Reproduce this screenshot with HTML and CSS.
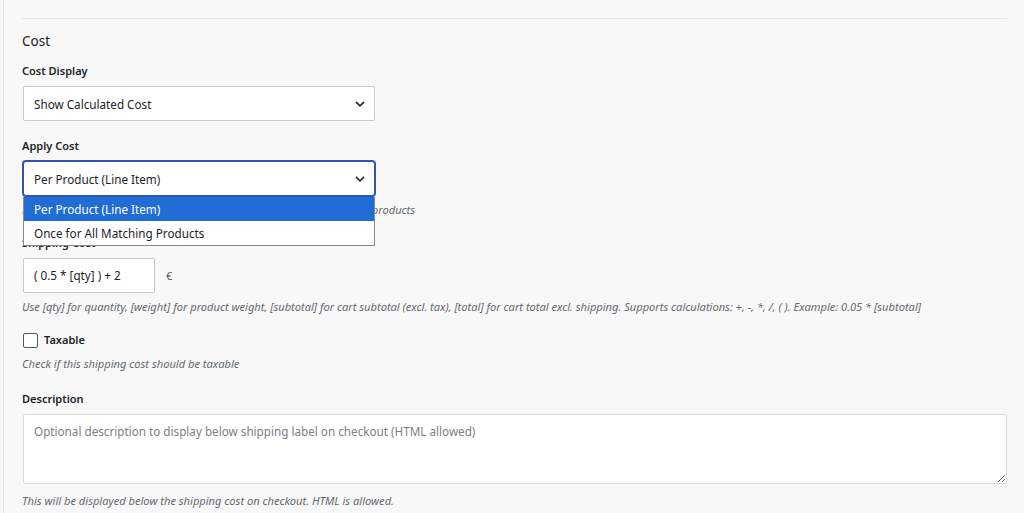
FILE: index.html
```html
<!DOCTYPE html>
<html lang="en">
<head>
    <meta charset="UTF-8">
    <title>Cost settings</title>
    <link rel="stylesheet" href="styles.css">
</head>
<body>
    <div class="page">
        <div class="divider"></div>

        <h3 class="section-title">Cost</h3>

        <div class="field">
            <label class="field-label">Cost Display</label>
            <div class="select">
                <span>Show Calculated Cost</span>
                <svg class="chevron" width="12" height="8" viewBox="0 0 12 8"><polyline points="2,2 6,5.8 10,2" fill="none" stroke="#2c3338" stroke-width="1.8"/></svg>
            </div>
        </div>

        <div class="field">
            <label class="field-label">Apply Cost</label>
            <div class="select-wrap">
                <div class="select focused">
                    <span>Per Product (Line Item)</span>
                    <svg class="chevron" width="12" height="8" viewBox="0 0 12 8"><polyline points="2,2 6,5.8 10,2" fill="none" stroke="#2c3338" stroke-width="1.8"/></svg>
                </div>
                <ul class="dropdown">
                    <li class="active">Per Product (Line Item)</li>
                    <li>Once for All Matching Products</li>
                </ul>
            </div>
            <p class="help">Per product applies cost to each line item, once applies to all matching products</p>
        </div>

        <div class="field">
            <label class="field-label">Shipping Cost</label>
            <div class="cost-row">
                <div class="text-input">( 0.5 * [qty] ) + 2</div>
                <span class="currency">€</span>
            </div>
            <p class="help">Use [qty] for quantity, [weight] for product weight, [subtotal] for cart subtotal (excl. tax), [total] for cart total excl. shipping. Supports calculations: +, -, *, /, ( ). Example: 0.05 * [subtotal]</p>
        </div>

        <div class="field">
            <label class="check-row">
                <span class="checkbox"></span>
                <span>Taxable</span>
            </label>
            <p class="help help-tight">Check if this shipping cost should be taxable</p>
        </div>

        <div class="field field-desc">
            <label class="field-label">Description</label>
            <textarea class="textarea" placeholder="Optional description to display below shipping label on checkout (HTML allowed)"></textarea>
            <p class="help help-desc">This will be displayed below the shipping cost on checkout. HTML is allowed.</p>
        </div>
    </div>
</body>
</html>
```

FILE: styles.css
```css
body {
    margin: 0;
    background: #f8f8f8;
    font-family: "Noto Sans", "Open Sans", sans-serif;
    color: #1d2327;
    overflow: hidden;
}
.page {
    margin-left: 3px;
    border-left: 1px solid #e6e6e6;
    padding: 18px 17px 0 18px;
    min-height: 513px;
    box-sizing: border-box;
}
.divider {
    border-top: 1px solid #e5e5e5;
}
.section-title {
    margin: 12px 0 0;
    font-size: 13.5px;
    font-weight: 400;
    line-height: 20px;
}
.field {
    margin-top: 11px;
}
.field + .field {
    margin-top: 16px;
}
.field-label {
    display: block;
    font-size: 11px;
    font-weight: 600;
    line-height: 18px;
    margin-bottom: 6px;
}
.select {
    width: 352px;
    height: 35px;
    margin-left: 1px;
    box-sizing: border-box;
    border: 1px solid #c9c9c9;
    border-radius: 2px;
    background: #fff;
    display: flex;
    align-items: center;
    justify-content: space-between;
    padding: 0 8px 0 10px;
    font-size: 11.7px;
}
.select.focused {
    border-color: #2c55b0;
    box-shadow: 0 0 0 1px #2c55b0;
    border-radius: 3px;
}
.chevron {
    display: block;
}
.select-wrap {
    position: relative;
}
.dropdown {
    position: absolute;
    top: 36px;
    left: 1px;
    width: 352px;
    box-sizing: border-box;
    margin: 0;
    padding: 0;
    list-style: none;
    background: #fff;
    border: 1px solid #8a8a8a;
    border-top: none;
    font-size: 11.7px;
    z-index: 2;
}
.dropdown li {
    height: 24px;
    line-height: 24px;
    padding-left: 10px;
}
.dropdown li.active {
    background: #1f6dd5;
    color: #fff;
}
.help {
    margin: 6px 0 0;
    font-size: 11.1px;
    font-style: italic;
    line-height: 16px;
    color: #646970;
}
.cost-row {
    display: flex;
    align-items: center;
    gap: 11px;
}
.text-input {
    width: 132px;
    height: 35px;
    margin-left: 1px;
    box-sizing: border-box;
    border: 1px solid #c9c9c9;
    border-radius: 2px;
    background: #fff;
    padding: 0 10px;
    font-size: 11.7px;
    line-height: 33px;
}
.currency {
    font-size: 11px;
    color: #50575e;
}
.check-row {
    display: flex;
    align-items: center;
    gap: 6px;
    font-size: 11px;
    font-weight: 600;
    line-height: 18px;
}
.checkbox {
    width: 13px;
    height: 13px;
    margin-left: 1px;
    border: 1px solid #50575e;
    border-radius: 2px;
    background: #fff;
}
.help-tight {
    margin-top: 7px;
}
.field-desc {
    margin-top: 18px !important;
}
.textarea {
    display: block;
    width: calc(100% - 1px);
    height: 70px;
    margin-left: 1px;
    box-sizing: border-box;
    border: 1px solid #dcdcdc;
    border-radius: 2px;
    background: #fff;
    padding: 8px 10px;
    font-family: "Noto Sans", "Open Sans", sans-serif;
    font-size: 11.7px;
    resize: vertical;
}
.textarea::placeholder {
    color: #7b7f84;
}
.help-desc {
    margin-top: 9px;
}
```
